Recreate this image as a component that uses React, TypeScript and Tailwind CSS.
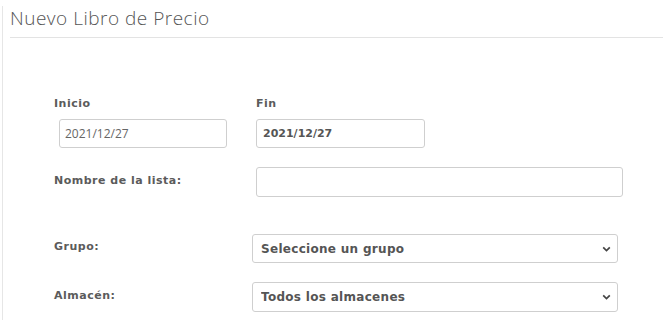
const labelCls = "text-[11px] leading-[16px] tracking-[0.5px] font-bold text-[#5b5b5b] font-['DejaVu_Sans',sans-serif]";

export default function App() {
    return (
        <div className="min-h-[324px] bg-white pt-[10px] pl-[2px] font-['Open_Sans',sans-serif] text-[#555]">
            <div className="h-[314px] border-l border-[#e6e6e6]">
                <div className="-mt-[4px] pl-[7px] text-[19px] leading-[24px] tracking-[0.5px] font-light text-[#555]">Nuevo Libro de Precio</div>
                <div className="mt-[7px] ml-[7px] border-t border-[#e3e3e3]" />

                <div className="pl-[51px]">
                    <div className="mt-[58px] flex">
                        <div className="w-[202px]">
                            <label className={`block ${labelCls}`}>Inicio</label>
                            <input readOnly value="2021/12/27" className="mt-[7px] ml-[5px] w-[168px] h-[29px] px-[5px] border border-[#cfcfcf] rounded-[3px] text-[12px] text-[#666] outline-none" />
                        </div>
                        <div>
                            <label className={`block ${labelCls}`}>Fin</label>
                            <input readOnly value="2021/12/27" className="mt-[7px] w-[169px] h-[29px] px-[6px] border border-[#cfcfcf] rounded-[3px] text-[11px] font-bold font-['DejaVu_Sans',sans-serif] text-[#555] outline-none" />
                        </div>
                    </div>

                    <div className="mt-[19px] flex items-center">
                        <label className={`w-[202px] -mt-[3px] ${labelCls}`}>Nombre de la lista:</label>
                        <input className="w-[367px] h-[30px] px-[5px] border border-[#cfcfcf] rounded-[3px] text-[12px] outline-none" />
                    </div>

                    <div className="mt-[37px] flex items-center">
                        <label className={`w-[198px] -mt-[3px] ${labelCls}`}>Grupo:</label>
                        <Select value="Seleccione un grupo" h="h-[29px]" />
                    </div>

                    <div className="mt-[19px] flex items-center">
                        <label className={`w-[198px] -mt-[3px] ${labelCls}`}>Almacén:</label>
                        <Select value="Todos los almacenes" h="h-[30px]" />
                    </div>
                </div>
            </div>
        </div>
    );
}

function Select({ value, h }: { value: string; h: string }) {
    return (
        <div className={`relative w-[366px] ${h}`}>
            <select className="w-full h-full appearance-none pl-[8px] pr-6 border border-[#cfcfcf] rounded-[3px] bg-white text-[12px] tracking-[0.3px] font-bold font-['DejaVu_Sans',sans-serif] text-[#555] outline-none">
                <option>{value}</option>
            </select>
            <svg className="absolute right-[7px] top-1/2 -translate-y-1/2 pointer-events-none" width="9" height="7" viewBox="0 0 9 7">
                <path d="M1.2 1.8 L4.5 5 L7.8 1.8" fill="none" stroke="#444" strokeWidth="1.7" />
            </svg>
        </div>
    );
}
